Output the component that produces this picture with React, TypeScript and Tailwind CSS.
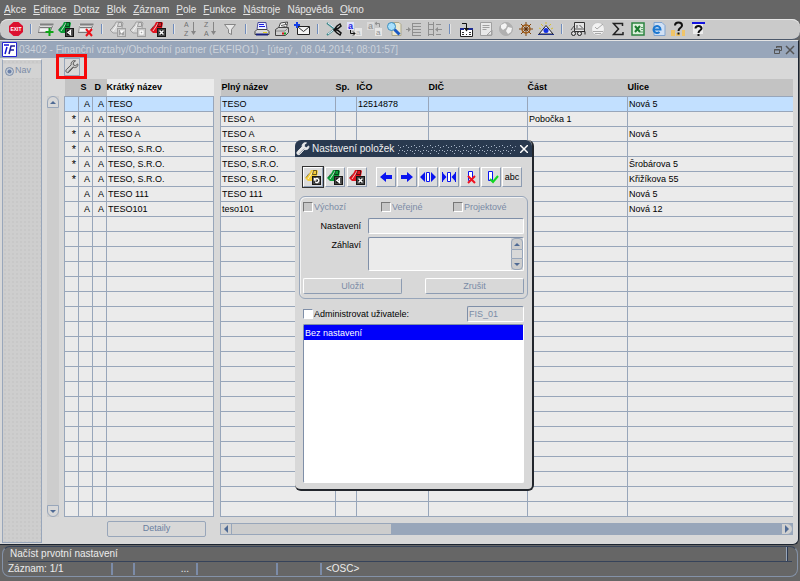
import type { ReactNode } from "react";
import clsx from "clsx";

function Svg({ children, size = 16 }: { children: ReactNode; size?: number }) {
  return (
    <svg width={size} height={size} viewBox="0 0 16 16" fill="none" aria-hidden="true">
      {children}
    </svg>
  );
}

function TagIcon({ fill, badge, off = false }: { fill: string; badge: string; off?: boolean }) {
  return (
    <Svg>
      <path d="M6 1h6l1 1-1 5v5H3L0 9l4-4z" fill={fill} stroke={off ? "#a0a0a0" : "none"} />
      <path d="M3 10l4-6 1-2" stroke={off ? "#f4f4f4" : "#ffffffc0"} />
      <path d="M8.500 1.500h3v4h-4z" stroke={off ? "#9a9a9a" : "#00000090"} />
      <path d="M1 8.500l3-4" stroke={off ? "#9a9a9a" : "#00000060"} />
      <rect x="7" y="7" width="9" height="9" fill={off ? "#a0a0a0" : "#161616"} />
      <rect x="8.500" y="8.500" width="6" height="6" stroke={off ? "#c8c8c8" : "#484848"} />
      <path d={badge} stroke="#fff" strokeWidth="1.500" />
    </Svg>
  );
}

const BADGE = {
  back: "M12.500 9.500v4l-2.500-2z",
  cross: "M9.500 9.500l4 4M13.500 9.500l-4 4",
  turn: "M10 12.500a2 2 0 1 0 .5-2.500M9.500 9v2h2",
  box: "M10 10h3v3h-3z",
  mark: "M10 10h3l-2 2M11 13.500v1",
};

function RecordIcon({ children }: { children: ReactNode }) {
  return (
    <Svg>
      <path d="M1 4h15l-3 8H0z" fill="#dcdcdc" />
      <path d="M2 3.500h13.500" stroke="#808080" strokeWidth="2" />
      <path d="M2 6.500h12M0 11.500h12M14.500 5l-2 5" stroke="#7a7a7a" />
      <path d="M2 9h9" stroke="#f4f4f4" strokeWidth="2" />
      <path d="M1.500 5L.5 11" stroke="#999" />
      {children}
    </Svg>
  );
}

function WrenchIcon({ light = false }: { light?: boolean }) {
  return (
    <Svg size={14}>
      <path
        d="M14.500 4.500L12 6.500L9.500 5.500L9.500 3L12 1C9.500 0 6.500 2 7 5.500L1.500 11C0 13 2 15.500 4.500 14L9.500 8.500C13 9.500 15.500 7 14.500 4.500Z"
        fill={light ? "#e8e8e8" : "#cfcfcf"}
        stroke={light ? "#f4f4f4" : "#484848"}
      />
      <path d="M3.500 13.500l6-6" stroke={light ? "#8a93a0" : "#555"} />
    </Svg>
  );
}

function SortIcon({ top, bottom }: { top: string; bottom: string }) {
  return (
    <Svg>
      <text x="2" y="6" fontSize="7" fontFamily="Liberation Sans, sans-serif" fill="#707070">{top}</text>
      <text x="2" y="15" fontSize="7" fontFamily="Liberation Sans, sans-serif" fill="#707070">{bottom}</text>
      <path d="M11.500 1v12" stroke="#858585" />
      <path d="M9 10h5l-2.500 4z" fill="#858585" />
    </Svg>
  );
}

function CopyIcon({ off = false }: { off?: boolean }) {
  return (
    <Svg>
      <rect x="1" y="1" width="7" height="8" fill={off ? "#dadada" : "#e0e3fa"} />
      <text x="2" y="8" fontSize="9" fontWeight="700" fontFamily="Liberation Sans, sans-serif" fill={off ? "#999" : "#2424e0"}>a</text>
      <rect x="9" y="7" width="7" height="8" fill="#e6e6e6" />
      <text x="10" y="14" fontSize="8" fontFamily="Liberation Sans, sans-serif" fill={off ? "#909090" : "#b4b4b4"}>a</text>
      <path d={off ? "M13.500 6V2.500H9M11 1L9 2.500 11 4" : "M4.500 9v3.500H9M7 10.500l2 2-2 2"} stroke={off ? "#909090" : "#111"} />
    </Svg>
  );
}

const toolGroups: { name: string; icon: ReactNode }[][] = [
  [
    {
      name: "Konec",
      icon: (
        <Svg>
          <path d="M5.500 1h5L15 5v6l-4.500 4h-5L1 11V5z" fill="#dc1030" />
          <text x="8" y="10" fontSize="5" fontWeight="700" textAnchor="middle" fontFamily="Liberation Sans, sans-serif" fill="#fff">EXIT</text>
        </Svg>
      ),
    },
  ],
  [
    {
      name: "Nový záznam",
      icon: (
        <RecordIcon>
          <path d="M11.500 7v8M7.500 11h8" stroke="#10a418" strokeWidth="2" />
        </RecordIcon>
      ),
    },
    { name: "Uložit záznam", icon: <TagIcon fill="#0c9c38" badge={BADGE.back} /> },
    {
      name: "Smazat záznam",
      icon: (
        <RecordIcon>
          <path d="M8 8l6 7M14 8l-6 7" stroke="#ec1018" strokeWidth="2" />
        </RecordIcon>
      ),
    },
  ],
  [
    { name: "Zadat dotaz", icon: <TagIcon fill="#d8d8d8" off badge={BADGE.mark} /> },
    { name: "Provést dotaz", icon: <TagIcon fill="#d8d8d8" off badge={BADGE.box} /> },
    { name: "Zrušit dotaz", icon: <TagIcon fill="#e01420" badge={BADGE.cross} /> },
  ],
  [
    { name: "Seřadit vzestupně", icon: <SortIcon top="A" bottom="Z" /> },
    { name: "Seřadit sestupně", icon: <SortIcon top="Z" bottom="A" /> },
    {
      name: "Filtr",
      icon: (
        <Svg>
          <path d="M2.500 3.500h11L9.500 8.500v5l-3-1.500V8.500z" fill="#e8e8e8" stroke="#858585" />
        </Svg>
      ),
    },
  ],
  [
    {
      name: "Tisk",
      icon: (
        <Svg>
          <path d="M4 1.500h8l1 7H3z" fill="#eef2ff" stroke="#4a4a9c" />
          <path d="M5 3.500h5M5 5.500h6" stroke="#1a1ae0" />
          <path d="M3 8.500h10l2 2v3H1v-3z" fill="#d8d8d8" stroke="#444" />
          <path d="M2 13.500h12" stroke="#18207c" strokeWidth="2" />
          <path d="M9 11.500h4" stroke="#e0d020" />
        </Svg>
      ),
    },
    {
      name: "Tiskárna",
      icon: (
        <Svg>
          <path d="M4.500 7l2-5 7-1-1 6z" fill="#fff" stroke="#444" />
          <path d="M7 4.500l5-1M6.500 6.500l5-1M10 1l3 3" stroke="#555" />
          <path d="M1.500 8.500l3-2h10v5l-3 3h-10z" fill="#cdcdcd" stroke="#444" />
          <path d="M2 10h9l3-3" stroke="#888" />
          <path d="M8 12.500h2" stroke="#e01020" strokeWidth="2" />
          <path d="M10 12.500h2" stroke="#10a020" strokeWidth="2" />
        </Svg>
      ),
    },
    {
      name: "Odeslat zprávu",
      icon: (
        <Svg>
          <path d="M3.500 5.500h12v8h-12z" fill="#f4f4f4" stroke="#222" />
          <path d="M4 6l5.500 4.500L15 6" stroke="#333" />
          <path d="M3 1v6M0 4h6" stroke="#1440e8" strokeWidth="2" />
        </Svg>
      ),
    },
  ],
  [
    {
      name: "Vyjmout",
      icon: (
        <Svg>
          <path d="M1 2l9 7M1 14l9-7" stroke="#3f8b8b" strokeWidth="2" />
          <path d="M2 2l8 6M2 13l8-6" stroke="#eef" />
          <path d="M8 9l3-4 3-2 1 2-3 2.500-3 1 3 1 3 2.500-1 2-3-2z" stroke="#111" strokeWidth="1.500" />
        </Svg>
      ),
    },
    { name: "Kopírovat", icon: <CopyIcon /> },
    { name: "Vložit", icon: <CopyIcon off /> },
    {
      name: "Hledat",
      icon: (
        <Svg>
          <path d="M6 1.500h7l2 2v11H6z" fill="#ece8d0" stroke="#aaa68c" />
          <circle cx="5.500" cy="5.500" r="4" fill="#a8e0fc" stroke="#3c8cbc" />
          <path d="M8.500 8.500l5 5" stroke="#1a58c4" strokeWidth="3" />
        </Svg>
      ),
    },
    {
      name: "Seznam hodnot",
      icon: (
        <Svg>
          <path d="M6 2.500h9M7 5.500h8M7 8.500h8M7 11.500h8M6 14.500h9M6.500 2v13M0 8.500h4" stroke="#8f8f8f" />
          <path d="M2 6l3 2.500L2 11z" fill="#8f8f8f" />
        </Svg>
      ),
    },
    {
      name: "Strom",
      icon: (
        <Svg>
          <path d="M2.500 1v14M7.500 1v14M2 3.500h6M2 8.500h6M2 13.500h6M10 3.500h5M10 13.500h5M10 8.500h6" stroke="#8f8f8f" />
          <path d="M12 6L9 8.500l3 2.500z" fill="#8f8f8f" />
        </Svg>
      ),
    },
  ],
  [
    {
      name: "Kalendář",
      icon: (
        <Svg>
          <path d="M2.500 7.500h12v8h-12z" fill="#fff" stroke="#222" />
          <path d="M2 8h4M10 8h5" stroke="#1c2a90" strokeWidth="2" />
          <path d="M4 11.500h2M11 11.500h2M4 13.500h2M8 13.500h1M11 13.500h2" stroke="#333" />
          <path d="M4 2.500h4.500V9" stroke="#111" />
          <path d="M6 7h5l-2.500 3.500z" fill="#111" />
        </Svg>
      ),
    },
    {
      name: "Poznámka",
      icon: (
        <Svg>
          <path d="M2.500 1.500h11v13h-11z" fill="#e8e8e8" stroke="#a0a0a0" />
          <path d="M4.500 4.500h7M4.500 6.500h7M4.500 8.500h4M9 14l5-5v5z" stroke="#a0a0a0" />
        </Svg>
      ),
    },
    {
      name: "Web",
      icon: (
        <Svg>
          <circle cx="8" cy="8" r="6.500" fill="#b0b0b0" stroke="#b0b0b0" />
          <path d="M3 4l4-2 2 2-1 3-3 2-2-2zM10 6l4 1-1 4-3 2-2-3z" fill="#f4f4f4" />
        </Svg>
      ),
    },
    {
      name: "Navigátor",
      icon: (
        <Svg>
          <path d="M8 1v14M1 8h14M3 3l10 10M13 3L3 13" stroke="#7c4410" />
          <circle cx="8" cy="8" r="4" stroke="#a05c18" strokeWidth="1.500" />
          <circle cx="8" cy="8" r="1.500" fill="#5c2c08" />
        </Svg>
      ),
    },
    {
      name: "Zobrazit",
      icon: (
        <Svg>
          <path d="M8 4.500L15 13H1z" fill="#e8e8f8" stroke="#222" />
          <path d="M3 3l2 2M8 1v2M13 3l-2 2M1 7l2 1M15 7l-2 1" stroke="#d8c030" />
          <circle cx="8" cy="9.500" r="2.500" fill="#1430e0" />
          <path d="M0 13.500h16" stroke="#203080" />
        </Svg>
      ),
    },
  ],
  [
    {
      name: "Náhled",
      icon: (
        <Svg>
          <path d="M4.500 1.500h10v9h-10z" fill="#e4e4e4" stroke="#333" />
          <path d="M7 4v3M9.500 4l3 3M5 8h9M1 9l3-4" stroke="#555" />
          <circle cx="3.500" cy="12.500" r="2" fill="#ddd" stroke="#222" />
          <circle cx="9.500" cy="12.500" r="2" fill="#ddd" stroke="#222" />
          <path d="M12 10.500h3v3" stroke="#222" />
        </Svg>
      ),
    },
    {
      name: "Úlohy",
      icon: (
        <Svg>
          <circle cx="8" cy="8" r="6.500" fill="#f2f2f2" stroke="#c4c4c4" />
          <path d="M5 6l2 2 6-5M3 10.500h10M5 12.500h6" stroke="#a8a8a8" />
        </Svg>
      ),
    },
    {
      name: "Součet",
      icon: (
        <Svg>
          <path d="M12.500 5V2.500H3.500L8.500 8l-5 5.500h9.500V11" stroke="#222" strokeWidth="1.500" />
        </Svg>
      ),
    },
    {
      name: "Excel",
      icon: (
        <Svg>
          <path d="M2 2h12v12H2z" fill="#dcf0dc" stroke="#2c8440" strokeWidth="1.500" />
          <path d="M5 5l5 6M10 5l-5 6" stroke="#1c7c30" strokeWidth="2" />
          <path d="M11 6.500h2M11 8.500h2M10 11h3" stroke="#5ca06c" />
        </Svg>
      ),
    },
    {
      name: "Prohlížeč",
      icon: (
        <Svg>
          <path d="M4 1.500h8l3 3v10H4z" fill="#d0e0f4" stroke="#80a4d0" />
          <path d="M3.500 8.500h7a3.500 3.500 0 1 0-1 2.500" stroke="#1c78d0" strokeWidth="2" />
        </Svg>
      ),
    },
    {
      name: "Kontextová nápověda",
      icon: (
        <Svg>
          <path d="M1 9h4v6H1zM6 12h4v3H6zM12 9h3v6h-3z" fill="#f0c468" />
          <path d="M5 4.500C5 .5 12 .5 12 4.500 12 7 8.500 6.500 8.500 10" stroke="#111" strokeWidth="2" />
          <path d="M8.500 11.500v2" stroke="#111" strokeWidth="2" />
        </Svg>
      ),
    },
    {
      name: "Nápověda",
      icon: (
        <Svg>
          <path d="M3 2h10v11H3z" fill="#ececec" />
          <path d="M2 2h13" stroke="#1414e0" strokeWidth="2" />
          <path d="M5.500 7.500C5.500 4 11.500 4 11.500 7.500 11.500 9.500 8.500 9 8.500 12" stroke="#111" strokeWidth="2" />
          <path d="M8.500 13v2" stroke="#111" strokeWidth="2" />
        </Svg>
      ),
    },
  ],
];

// label split around the mnemonic letter
const menu = [
  ["", "A", "kce"],
  ["", "E", "ditace"],
  ["", "D", "otaz"],
  ["", "B", "lok"],
  ["", "Z", "áznam"],
  ["", "P", "ole"],
  ["", "F", "unkce"],
  ["", "N", "ástroje"],
  ["Náp", "o", "věda"],
  ["", "O", "kno"],
];

type Row = { mark?: string; short: string; full: string; ico?: string; part?: string; street?: string };

const rows: Row[] = [
  { short: "TESO", full: "TESO", ico: "12514878", street: "Nová 5" },
  { mark: "*", short: "TESO A", full: "TESO A", part: "Pobočka 1" },
  { mark: "*", short: "TESO A", full: "TESO A", street: "Nová 5" },
  { mark: "*", short: "TESO, S.R.O.", full: "TESO, S.R.O." },
  { mark: "*", short: "TESO, S.R.O.", full: "TESO, S.R.O.", street: "Šrobárova 5" },
  { mark: "*", short: "TESO, S.R.O.", full: "TESO, S.R.O.", street: "Křižíkova 55" },
  { short: "TESO 111", full: "TESO 111", street: "Nová 5" },
  { short: "TESO101", full: "teso101", street: "Nová 12" },
];

const lines: (Row | null)[] = Array.from({ length: 28 }, (_, i) => rows[i] ?? null);

const cell = "h-[15px] overflow-hidden border border-[#98a6ba] p-0 pl-px leading-3 whitespace-nowrap";
const head = "h-[17px] p-0 text-left leading-4 whitespace-nowrap";
const raised = "border border-t-white border-l-white border-r-[#8d9cb2] border-b-[#8d9cb2]";
const sunken = "border border-t-[#7f8fa8] border-l-[#7f8fa8] border-r-white border-b-white";

function Arrow({ dir }: { dir: "up" | "down" | "left" | "right" }) {
  const d = {
    up: "M1 6L4 3L7 6z",
    down: "M1 3L4 6L7 3z",
    left: "M6 0L2 4L6 8z",
    right: "M2 0L6 4L2 8z",
  }[dir];
  return (
    <svg width="8" height="8" viewBox="0 0 8 8" aria-hidden="true">
      <path d={d} fill="#4f6a94" />
    </svg>
  );
}

function Toolbar() {
  return (
    <div className="flex h-[21px] items-center rounded-lg border-b border-[#4c586a] bg-[#cacaca] pl-1.5 shadow-[inset_0_1px_0_#e6e6e6]">
      {toolGroups.map((group, i) => (
        <div key={i} className="flex items-center">
          {i > 0 && (
            <span className={clsx("flex justify-center", i === 1 ? "w-2.5" : "w-3")}>
              <span className="h-2.5 w-0.5 border-l border-[#6f8cbc] bg-[#e4e4e4]" />
            </span>
          )}
          {group.map((tool) => (
            <button key={tool.name} type="button" aria-label={tool.name} className="flex h-5 w-5 items-center justify-center">
              {tool.icon}
            </button>
          ))}
        </div>
      ))}
    </div>
  );
}

function NameTable() {
  return (
    <table className="w-full table-fixed border-collapse">
      <thead>
        <tr className="bg-[#c3c3c3]">
          <th className={clsx(head, "w-3.5")} />
          <th className={clsx(head, "w-3.5 pl-0.5")}>S</th>
          <th className={clsx(head, "w-3.5 pl-0.5")}>D</th>
          <th className={clsx(head, "bg-[#ebebeb]")}>Krátký název</th>
        </tr>
      </thead>
      <tbody>
        {lines.map((row, i) => (
          <tr key={i} className={i === 0 ? "bg-[#c2e0ff]" : "bg-[#ebebeb]"}>
            <td className={clsx(cell, "pr-0.5 text-right text-[11px]")}>{row?.mark}</td>
            <td className={clsx(cell, "pr-0.5 text-right")}>{row && "A"}</td>
            <td className={clsx(cell, "pr-0.5 text-right")}>{row && "A"}</td>
            <td className={cell}>{row?.short}</td>
          </tr>
        ))}
      </tbody>
    </table>
  );
}

function DetailTable() {
  return (
    <table className="w-full table-fixed border-collapse">
      <thead>
        <tr className="bg-[#c3c3c3]">
          <th className={clsx(head, "w-[115px] pl-px")}>Plný název</th>
          <th className={clsx(head, "w-[21px]")}>Sp.</th>
          <th className={clsx(head, "w-[72px]")}>IČO</th>
          <th className={clsx(head, "w-[99px]")}>DIČ</th>
          <th className={clsx(head, "w-[100px]")}>Část</th>
          <th className={head}>Ulice</th>
        </tr>
      </thead>
      <tbody>
        {lines.map((row, i) => (
          <tr key={i} className={i === 0 ? "bg-[#c2e0ff]" : "bg-[#ebebeb]"}>
            <td className={cell}>{row?.full}</td>
            <td className={cell} />
            <td className={cell}>{row?.ico}</td>
            <td className={cell} />
            <td className={cell}>{row?.part}</td>
            <td className={clsx(cell, "border-r-0")}>{row?.street}</td>
          </tr>
        ))}
      </tbody>
    </table>
  );
}

const blue = "#0a14f0";

const dialogTools: { name: string; icon: ReactNode }[] = [
  { name: "Posun vlevo", icon: <Svg><path d="M2 8l6-5v3h6v4H8v3z" fill={blue} /></Svg> },
  { name: "Posun vpravo", icon: <Svg><path d="M14 8L8 3v3H2v4h6v3z" fill={blue} /></Svg> },
  {
    name: "Rozšířit",
    icon: <Svg><path d="M0 8l5-5v10zM16 8l-5-5v10z" fill={blue} /><path d="M6.500 3.500h3v9h-3z" fill="#fff" stroke={blue} /></Svg>,
  },
  {
    name: "Zúžit",
    icon: (
      <Svg>
        <path d="M5.500 8L1 3v10zM10.500 8L15 3v10z" fill={blue} />
        <path d="M1.500 3v10M14.500 3v10" stroke={blue} />
        <path d="M6.500 3.500h3v9h-3z" fill="#fff" stroke={blue} />
      </Svg>
    ),
  },
  {
    name: "Skrýt položku",
    icon: <Svg><path d="M6.500 2.500h4v9h-4z" fill="#fff" stroke={blue} /><path d="M6 7l7 7M13 7l-7 7" stroke="#f01020" strokeWidth="2" /></Svg>,
  },
  {
    name: "Zobrazit položku",
    icon: <Svg><path d="M5.500 2.500h4v9h-4z" fill="#fff" stroke={blue} /><path d="M7 10l3 3 5-6" stroke="#10d820" strokeWidth="2" /></Svg>,
  },
];

function Check({ label, className }: { label: string; className?: string }) {
  return (
    <label className={clsx("flex items-center gap-px text-[#7a8ba6]", className)}>
      <input type="checkbox" disabled className="h-2.5 w-2.5 appearance-none border border-t-[#777] border-l-[#777] border-r-white border-b-white bg-[#c6c6c6]" />
      {label}
    </label>
  );
}

function SettingsDialog() {
  const btn = clsx("flex h-5 w-5 items-center justify-center bg-[#dcdcdc]", raised);
  return (
    <div
      role="dialog"
      aria-label="Nastavení položek"
      className="absolute top-[140px] left-[295px] w-[239px] rounded-md border-r-2 border-b-2 border-[#22262c] bg-[#d8d8d8] pb-1.5 text-[9px] leading-3"
    >
      <div className="flex h-[17px] items-center gap-0.5 rounded-t-md bg-[#29394f] pr-0.5 pl-px text-[10px] text-[#f0f0f0]">
        <WrenchIcon light />
        <span>Nastavení položek</span>
        <svg className="ml-0.5 h-2.5 flex-1" aria-hidden="true">
          <defs>
            <pattern id="grip" width="8" height="8" patternUnits="userSpaceOnUse">
              <path d="M0 1h1v1H0zM2 3h1v1H2zM5 2h1v1H5zM4 6h1v1H4zM6 7h1v1H6zM1 6h1v1H1z" fill="#a9b6c8" />
            </pattern>
          </defs>
          <rect width="100%" height="10" fill="url(#grip)" />
        </svg>
        <button type="button" aria-label="Zavřít" className="flex h-4 w-3 items-center justify-center">
          <svg width="8" height="8" viewBox="0 0 8 8" stroke="#fff" strokeWidth="1.500" aria-hidden="true">
            <path d="M0 0l8 8M8 0L0 8" />
          </svg>
        </button>
      </div>

      <div className="flex justify-between px-2 pt-2.5 pr-2.5">
        <div className="flex gap-0.5">
          <button type="button" aria-label="Obnovit" className={clsx(btn, "outline-1 outline-[#333]")}>
            <TagIcon fill="#f4cc3c" badge={BADGE.turn} />
          </button>
          <button type="button" aria-label="Načíst" className={btn}><TagIcon fill="#0c9c38" badge={BADGE.back} /></button>
          <button type="button" aria-label="Odstranit" className={btn}><TagIcon fill="#e01420" badge={BADGE.cross} /></button>
        </div>
        <div className="flex gap-px">
          {dialogTools.map((tool) => (
            <button key={tool.name} type="button" aria-label={tool.name} className={btn}>{tool.icon}</button>
          ))}
          <button type="button" className={btn}>abc</button>
        </div>
      </div>

      <div className="mx-1 mt-[9px] rounded-md border border-[#98a6ba] px-[3px] pt-1 pb-1 shadow-[inset_1px_1px_0_#f2f2f2]">
        <div className="flex">
          <Check label="Výchozí" className="w-[78px]" />
          <Check label="Veřejné" className="w-[72px]" />
          <Check label="Projektové" />
        </div>
        <div className="mt-[5px] flex items-center gap-[7px]">
          <label htmlFor="setting" className="w-[58px] text-right">Nastavení</label>
          <input id="setting" className={clsx("h-4 min-w-0 flex-1 rounded-xs bg-[#ebebeb] px-0.5", sunken)} />
        </div>
        <div className="mt-[3px] flex gap-[7px]">
          <label htmlFor="heading" className="w-[58px] pt-0.5 text-right">Záhlaví</label>
          <div className={clsx("flex h-[34px] min-w-0 flex-1 rounded-xs bg-[#ebebeb]", sunken)}>
            <textarea id="heading" className="min-w-0 flex-1 resize-none" />
            <div className="flex w-3 flex-col bg-[#d8d8d8]">
              <button type="button" aria-label="Nahoru" className="flex h-3 items-center justify-center rounded-t-sm border border-[#98a6ba] bg-[#cdcdcd]"><Arrow dir="up" /></button>
              <span className="flex-1 border-x border-[#98a6ba]" />
              <button type="button" aria-label="Dolů" className="flex h-3 items-center justify-center rounded-b-sm border border-[#98a6ba] bg-[#cdcdcd]"><Arrow dir="down" /></button>
            </div>
          </div>
        </div>
        <div className="mt-[7px] flex justify-between text-[#7a8ba6]">
          <button type="button" disabled className={clsx("h-4 w-[99px] rounded-xs", raised)}>Uložit</button>
          <button type="button" disabled className={clsx("h-4 w-[99px] rounded-xs", raised)}>Zrušit</button>
        </div>
      </div>

      <div className="mt-[7px] flex items-center justify-between px-2">
        <label className="flex items-center gap-px">
          <input type="checkbox" className={clsx("h-2.5 w-2.5 appearance-none bg-white", sunken)} />
          Administrovat uživatele:
        </label>
        <input aria-label="Uživatel" readOnly value="FIS_01" className={clsx("h-4 w-[57px] rounded-xs bg-[#dcdcdc] px-px text-[#7a8ba6]", sunken)} />
      </div>

      <ul role="listbox" aria-label="Nastavení" className={clsx("mx-2 mt-0.5 h-[159px] rounded-xs bg-white", sunken)}>
        <li role="option" aria-selected="true" className="h-[15px] bg-[#0000fa] pl-px leading-4 text-white">Bez nastavení</li>
      </ul>
    </div>
  );
}

export default function App() {
  return (
    <div className="relative flex min-h-screen flex-col overflow-hidden bg-[#666] font-['Liberation_Sans',sans-serif] text-[10px] text-black">
      <nav className="flex h-[19px] items-center gap-[7px] px-1 text-[#e6e6e6]">
        {menu.map(([before, key, after]) => (
          <button key={key + after} type="button" className="leading-4">
            {before}
            <span className="underline">{key}</span>
            {after}
          </button>
        ))}
      </nav>
      <Toolbar />

      <main className="mr-px rounded-br-md border-t border-r border-b border-t-[#e4e4e4] border-r-[#1c2430] border-b-[#1c2430] bg-[#d8d8d8]">
        <header className="flex h-[17px] items-center gap-0.5 bg-[#98a6ba] pr-[3px] pl-0.5 text-[#cdd3db]">
          <svg width="15" height="15" viewBox="0 0 15 15" fill="none" aria-hidden="true">
            <path d="M.5.5h14v14H.5z" fill="#fff" stroke="#2424d0" />
            <path d="M5 5L3 12M2 3h5" stroke="#1414d8" strokeWidth="1.500" />
            <path d="M7 12l2-8h4M8 8h4" stroke="#1c1c9c" strokeWidth="1.500" />
          </svg>
          <h1 className="flex-1 whitespace-nowrap">
            03402 - Finanční vztahy/Obchodní partner (EKFIRO1) - [úterý , 08.04.2014; 08:01:57]
          </h1>
          <button type="button" aria-label="Obnovit okno">
            <svg width="10" height="10" viewBox="0 0 10 10" fill="none" stroke="#555" aria-hidden="true">
              <path d="M3.500 3V1.500h5v4H7M3 2h6M1.500 4.500h5v4h-5zM1 5h6" />
            </svg>
          </button>
          <button type="button" aria-label="Zavřít okno">
            <svg width="10" height="10" viewBox="0 0 10 10" stroke="#555" strokeWidth="1.500" aria-hidden="true">
              <path d="M1 1l8 8M9 1L1 9" />
            </svg>
          </button>
        </header>

        <div className="flex pl-0.5">
          <aside className="mt-px mb-px w-10 shrink-0 border border-[#98a6ba] border-t-white bg-[#cecece] bg-[radial-gradient(#c8c8c8_1px,transparent_1px)] bg-size-[4px_4px] pt-1">
            <a href="#nav" className="flex h-3.5 items-center gap-px bg-[#d3d3d3] pl-0.5 text-[9px] text-[#7a8ba6]">
              <svg width="9" height="9" viewBox="0 0 9 9" fill="none" aria-hidden="true">
                <circle cx="4.500" cy="4.500" r="4" fill="#c4ccd8" stroke="#7a8ba6" />
                <circle cx="4.500" cy="4.500" r="2" fill="#6a80a8" />
              </svg>
              Nav
            </a>
          </aside>

          <div className="min-w-0 flex-1 pr-[5px] pb-[7px] pl-[5px] text-[9px]">
            <div className="flex h-[21px] pl-[17px]">
              <span className="relative flex h-[18px] w-4">
                <button type="button" aria-label="Nastavení položek" className="flex w-4 items-center justify-center border border-[#98a6ba]">
                  <WrenchIcon />
                </button>
                <span className="pointer-events-none absolute -top-1 -left-2 h-[25px] w-[31px] border-3 border-[#f60808]" />
              </span>
            </div>
            <div className="flex">
              <div className="mt-[17px] mb-5 flex w-3 shrink-0 flex-col justify-between bg-[#cdcdcd]">
                <button type="button" aria-label="Předchozí" className="flex h-3 items-center justify-center rounded-t-md border border-[#98a6ba] bg-[#d8d8d8]"><Arrow dir="up" /></button>
                <button type="button" aria-label="Další" className="flex h-3 items-center justify-center rounded-b-md border border-[#98a6ba] bg-[#d8d8d8]"><Arrow dir="down" /></button>
              </div>
              <div className="ml-[5px] w-[150px] shrink-0">
                <NameTable />
                <button type="button" className="mt-1 ml-[43px] h-4 w-[99px] rounded-xs border border-[#98a6ba] text-[#6a7f9f]">Detaily</button>
              </div>
              <div className="ml-1.5 min-w-0 flex-1">
                <DetailTable />
                <div className="mt-1.5 flex h-3 bg-[#98a6ba]">
                  <button type="button" aria-label="Vlevo" className="flex w-3 items-center justify-center border border-[#98a6ba] bg-[#d0d0d0]"><Arrow dir="left" /></button>
                  <div className="w-[159px] border-y border-[#98a6ba] bg-[#cdcdcd]" />
                  <button type="button" aria-label="Vpravo" className="ml-auto flex w-3 items-center justify-center rounded-r-md border border-[#98a6ba] bg-[#d0d0d0]"><Arrow dir="right" /></button>
                </div>
              </div>
            </div>
          </div>
        </div>
      </main>

      <footer className="mx-0.5 mt-px rounded-lg border border-[#8492a8] border-t-[#36435a] px-[5px] text-[#ececec]">
        <div className="flex h-[15px] items-center border-b border-[#36435a] pr-1 pl-0.5">
          <span className="flex-1">Načíst prvotní nastavení</span>
          <span className="h-3.5 w-0.5 border-r border-[#2c3950] bg-[#98a6ba]" />
        </div>
        <div className="flex h-3.5 items-center leading-3">
          <span className="w-[103px]">Záznam: 1/1</span>
          <span className="h-3 w-[22px] border-l-2 border-[#7c8ca8]" />
          <span className="h-3 w-[63px] border-l-2 border-[#7c8ca8] pr-[7px] text-right">...</span>
          <span className="h-3 w-20 border-l-2 border-[#7c8ca8]" />
          <span className="h-3 w-11 border-l-2 border-[#7c8ca8]" />
          <span className="h-3 border-l-2 border-[#7c8ca8] pl-1">&lt;OSC&gt;</span>
        </div>
      </footer>

      <SettingsDialog />
    </div>
  );
}
